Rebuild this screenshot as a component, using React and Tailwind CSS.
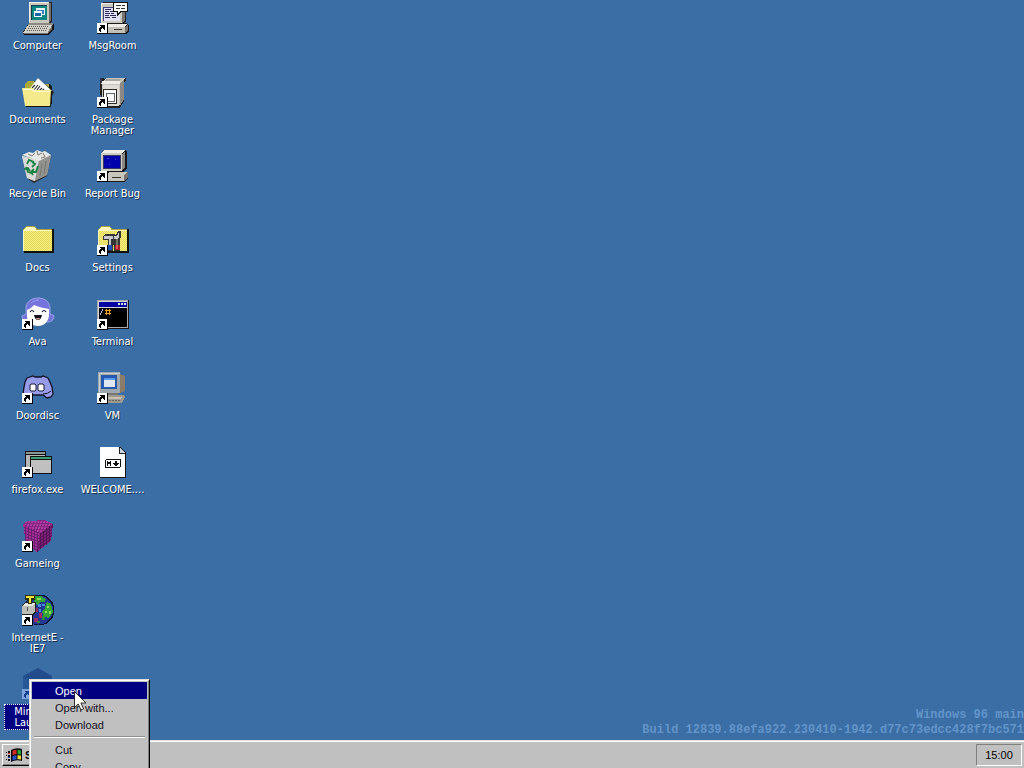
import React from "react";

function Shortcut() {
  return (
    <g>
      <rect x="0" y="21" width="11" height="11" fill="#000" />
      <rect x="0" y="21" width="10" height="10" fill="#fff" />
      <path d="M3 23h5v5H7v-1H6v-1H5v1H4v3H3v-1H2v-3h1v-1h1v-1H3z" fill="#000" />
    </g>
  );
}

function Icon({ children, shortcut, smooth, className = "" }) {
  return (
    <svg
      viewBox="0 0 32 32"
      className={`size-8 shrink-0 overflow-visible ${className}`}
      shapeRendering={smooth ? "auto" : "crispEdges"}
      aria-hidden="true"
    >
      {children}
      {shortcut && <Shortcut />}
    </svg>
  );
}

function ComputerIcon() {
  return (
    <Icon>
      <path d="M8 0h21l1 1v18l-3 3H7z" fill="#222" />
      <path d="M26 1h3v17l-3 3z" fill="#706c68" />
      <path d="M7 0h20v21H7z" fill="#c9c6bf" />
      <path d="M7 0h20v1H8v19H7z" fill="#f2f0ea" />
      <path d="M9 3h16v15H9z" fill="#123c42" />
      <path d="M10 4h15v14H10z" fill="#0b8580" />
      <path d="M14 6h9v7h-9z" fill="#e9f3ff" />
      <path d="M15 8h7v4h-7z" fill="#3b7fc0" />
      <path d="M12 9h8v6h-8z" fill="#f4fbff" />
      <path d="M13 11h6v3h-6z" fill="#1868a8" />
      <path d="M7 21h21l4 1v5l-5 6H2l-1-3z" fill="#111" />
      <path d="M7 21h24v2H6z" fill="#8b8984" />
      <path d="M6 23h24l-4 8H1z" fill="#d3d0c8" />
      <path d="M30 23v4l-4 5v-2z" fill="#74726e" />
      <path d="M7 24.5h19M5.500 26.500h20M4.500 28.500h19" stroke="#55534f" strokeDasharray="1 1" />
      <path d="M2 31h24v1H2z" fill="#77746f" />
    </Icon>
  );
}

function MsgRoomIcon() {
  return (
    <Icon shortcut>
      <path d="M6 0h21l2 2v17l-3 3H5z" fill="#292826" />
      <path d="M25 3h3v15l-3 3z" fill="#77746f" />
      <path d="M4 1h21v20H4z" fill="#cbc8c0" />
      <path d="M4 1h21v1H5v18H4z" fill="#efede7" />
      <path d="M6 5h17v14H6z" fill="#444078" />
      <path d="M7 6h16v13H7z" fill="#e3e1f6" />
      <path d="M8 7.500h6M8 9.500h4m1 0h5M8 11.500h5m1 0h3M8 13.500h4m1 0h6M8 15.500h5m2 0h4" stroke="#2c285f" />
      <path d="M7 21h23l2 3v5l-3 3H7z" fill="#1c1b1a" />
      <path d="M8 22h22l-2 3H8z" fill="#eeece6" />
      <path d="M8 25h20v6H8z" fill="#c3c0b8" />
      <path d="M28 25l3-2v5l-3 3z" fill="#77746f" />
      <path d="M17 27.500h8" stroke="#383632" />
      <path d="M16 0h15v10h-7l-4 4v-4h-4z" fill="#111" />
      <path d="M17 1h13v8h-7l-2 3V9h-4z" fill="#fff" />
      <path d="M19 3.500h5m1 0h3M19 6.500h4m1 0h4" stroke="#333" />
    </Icon>
  );
}

function DocumentsIcon() {
  return (
    <Icon smooth>
      <path d="M4 8l3-3h6l3 3h12l2 3v17H4z" fill="#15150c" />
      <path d="M3 8l3-3h6l3 3h12v20H3z" fill="#aaa936" />
      <path d="M7 16L16 2l16 14-4 8z" fill="#222" />
      <path d="M6 15L16 2l14 13-4 8z" fill="#fff" />
      <path d="M10 12l3-3m-1 5l4-5m-1 5l3-4m-1 5l3-3m-1 4l3-3m0 4l2-2" stroke="#333" strokeWidth="1.2" />
      <path d="M1 13h10l2 2h17l-1 16H4z" fill="#171710" />
      <path d="M0 12h11l2 2h16l-1 16H3z" fill="#f4e98b" />
      <path d="M1 13h10l2 2h15v1H12l-2-2H1z" fill="#fffbd0" />
    </Icon>
  );
}

function PackageIcon() {
  return (
    <Icon shortcut>
      <path d="M3 5l2-3 3 1 5-1h16v2l-2 3v18l-4 7H4z" fill="#22211f" />
      <path d="M5 6l5-4h18l-5 5v22H5z" fill="#c8c5bf" />
      <path d="M23 8l4-5v20l-4 7z" fill="#8c8984" />
      <path d="M4 5h19v3H4z" fill="#efede8" />
      <path d="M6 9h16v21H6z" fill="#dedbd5" />
      <path d="M10 3h15l-3 2H7z" fill="#aaa7a1" />
      <path d="M3 2h2v5H3z" fill="#35354b" />
      <path d="M6 13h14v15H6z" fill="#2d2926" />
      <path d="M7 14h12v13H7z" fill="#fff" />
      <path d="M9 17h9v9H9z" fill="#666" />
      <path d="M10 18h7v7h-7z" fill="#fff" />
    </Icon>
  );
}

function RecycleIcon() {
  return (
    <Icon smooth>
      <path d="M2 7l27-2-4 21-13 7-6-4z" fill="#262727" />
      <path d="M0 6l17 4 12-5-4 20-13 6-7-3z" fill="#b9bab7" />
      <path d="M0 6l17 4-4 21-8-3z" fill="#d9dad7" />
      <path d="M17 10l12-5-4 20-12 6z" fill="#92938f" />
      <path d="M0 5l7-3 4 1 4-3 5 2 3-1 6 4-12 6z" fill="#e7e8e5" />
      <path d="M6 4l4 2 3-3m2-2l1 4 4-2m1 0l2 4-4 1" fill="none" stroke="#777975" />
      <path d="M5 14l2-4 5 2m-2 5l3-3-3-2M4 17l2 5 3 1M2 19l4-1 2 3m8-5l-2 6h-4m2-3l-3 3 2 3" fill="none" stroke="#168241" strokeWidth="1.800" />
      <path d="M20 13l-2 13m6-15l-2 13" stroke="#777975" strokeWidth="1" />
    </Icon>
  );
}

function ReportIcon() {
  return (
    <Icon shortcut>
      <path d="M7 0h22l1 2v16l-3 4H5z" fill="#181717" />
      <path d="M25 4l3-3v16l-3 4z" fill="#8a8781" />
      <path d="M4 3l3-3h21l-3 3z" fill="#efede8" />
      <path d="M4 3h21v18H4z" fill="#cfccc5" />
      <path d="M6 5h18v14H6z" fill="#393959" />
      <path d="M7 6h16v12H7z" fill="#0001ad" />
      <path d="M10 8h2v1h-2zm8 1h1v1h-1zm-6 5h1v1h-1z" fill="#3150d0" />
      <path d="M9 22h22v6l-4 4H9z" fill="#1b1a19" />
      <path d="M9 24l4-2h17l-3 3v6H9z" fill="#c8c5bd" />
      <path d="M27 25l4-3v6l-4 3z" fill="#77746f" />
      <path d="M15 27.500h9" stroke="#302e2b" />
    </Icon>
  );
}

function FolderShape({ id }) {
  return (
    <g>
      <defs>
        <pattern id={id} width="2" height="2" patternUnits="userSpaceOnUse">
          <rect width="2" height="2" fill="#f6ec80" />
          <rect width="1" height="1" fill="#e3d858" />
          <rect x="1" y="1" width="1" height="1" fill="#e3d858" />
        </pattern>
      </defs>
      <path d="M1 6l3-4h8l3 3h16l1 1v23H2z" fill="#11110b" />
      <path d="M1 5l3-3h8l3 3h15v22H1z" fill="#a8a344" />
      <path d="M3 4l1-1h8l2 2v1H2z" fill="#fff8bb" />
      <rect x="1" y="7" width="29" height="20" fill={`url(#${id})`} />
      <path d="M1 6h29v1H2v20H1z" fill="#fff9bd" />
    </g>
  );
}

function DocsIcon() {
  return (
    <Icon>
      <FolderShape id="folder-docs" />
    </Icon>
  );
}

function SettingsIcon() {
  return (
    <Icon shortcut>
      <FolderShape id="folder-settings" />
      <path d="M6 12l3-2h8l2 1 2-4h3v7h-1v13h-6v-6h-1v6h-5V16H6z" fill="#343432" />
      <path d="M7 12h9v3H7zM12 14h2v8h-2zM17 12h3l2-4v6l-2 1h-3z" fill="#c9c9c9" />
      <path d="M19 15h2v6h-2z" fill="#77746c" />
      <path d="M11 21h4v5h-4z" fill="#1d51b8" />
      <path d="M18 21h5v5h-5z" fill="#9e1e28" />
      <path d="M19 21h2v4h-2z" fill="#e45357" />
    </Icon>
  );
}

function AvaIcon() {
  return (
    <Icon shortcut smooth>
      <path
        d="M4 9C5 3 10 0 16 0s11 3 12 9l0 7c2 1 4 1 4 2 0 3-2 6-6 6H6c-4 0-6-3-6-6 1-1 3-1 4-2z"
        fill="#7474dc"
        stroke="#b3baf5"
        strokeWidth=".7"
      />
      <path d="M5 12c3-1 5-3 7-5 4 2 10 3 15 4v7c-1 6-5 10-11 10S5 24 5 18z" fill="#fff" />
      <path d="M8 14q2-3 4 0m8 0q2-3 4 0" fill="none" stroke="#171735" strokeWidth="1.200" />
      <path d="M12 17h8q-1 5-4 5t-4-5z" fill="#101020" />
      <path d="M14 20h4l-1 1.500h-2z" fill="#d9a080" />
      <path d="M9 5q3-3 8-3" fill="none" stroke="#9b9bf5" />
    </Icon>
  );
}

function TerminalIcon() {
  return (
    <Icon shortcut>
      <path d="M0 2h32v29H0z" fill="#151515" />
      <path d="M0 2h31v28H0z" fill="#aaa" />
      <path d="M1 3h29v26H1z" fill="#d5d5d5" />
      <path d="M2 4h28v5H2z" fill="#0000a2" />
      <path d="M21 5h2v2h-2zm3 0h2v2h-2zm3 0h2v2h-2z" fill="#ddd" />
      <path d="M2 10h28v19H2z" fill="#000" />
      <path d="M6 11v2H5v2H4v2H3v-2h1v-2h1v-2z" fill="#bccaff" />
      <path d="M9 11h1v6H9zm3 0h1v6h-1zm-4 1h6v1H8zm0 3h6v1H8z" fill="#f2a127" />
    </Icon>
  );
}

function DoordiscIcon() {
  return (
    <Icon shortcut smooth>
      <path
        d="M5 6l6-2 2 1h6l2-1 5 2 2 4 2 5 1 7-2 3-4 1-4-3H10l-4 3-5-4 1-7 1-5z"
        fill="#979be8"
        stroke="#111027"
        strokeWidth="1.300"
      />
      <path d="M21 22q5 0 8-3" fill="none" stroke="#111027" />
      <path d="M9 12h4l1 1v5l-1 1H9l-1-1v-5zm8 0h4l1 1v5l-1 1h-4l-1-1v-5z" fill="#fff" stroke="#171739" />
    </Icon>
  );
}

function VmIcon() {
  return (
    <Icon shortcut>
      <path d="M23 2l5 2v15l-5 2z" fill="#8b7b6a" />
      <path d="M1 0h22v21H1z" fill="#9fa7ae" />
      <path d="M2 1h21v1H3v18H2z" fill="#cbd1d5" />
      <path d="M4 3h16v14H4z" fill="#2f5999" />
      <path d="M5 4h14v12H5z" fill="#2458b4" />
      <path d="M7 6h11v9H7z" fill="#dfe6ed" />
      <path d="M7 6h11v2H7z" fill="#5a9be5" />
      <path d="M10 21h11v3H10z" fill="#7b7770" />
      <path d="M8 24l3-1h15l2 2-3 6H8z" fill="#9e998f" />
      <path d="M11 25h14l-1 2H11z" fill="#c7c0b4" />
      <path d="M12 28.500h11" stroke="#686660" strokeDasharray="2 1" />
    </Icon>
  );
}

function FirefoxIcon() {
  return (
    <Icon shortcut>
      <path d="M3 5h21v19H3z" fill="#111" />
      <path d="M4 6h19v17H4z" fill="#b7b7b7" />
      <path d="M4 6h19v2H4z" fill="#8b9592" />
      <path d="M4 8h19v1H4z" fill="#111" />
      <path d="M8 10h22v18H8z" fill="#111" />
      <path d="M9 11h20v16H9z" fill="#c0c0c0" />
      <path d="M9 11h20v2H9z" fill="#3e9c77" />
      <path d="M9 13h20v1H9z" fill="#111" />
    </Icon>
  );
}

function MarkdownIcon() {
  return (
    <Icon>
      <path d="M3 1h20l6 6v25H3z" fill="#141414" />
      <path d="M3 1h19v6h6v24H3z" fill="#fff" />
      <path d="M22 1l6 6h-6z" fill="#c7d4df" />
      <path d="M22 1v6h6" fill="none" stroke="#222" />
      <rect x="8.500" y="13.500" width="15" height="8" rx="1.500" fill="#fff" stroke="#111" />
      <path d="M10 20v-5h1l1 2 1-2h1v5h-1v-3l-1 2-1-2v3zM18 15h2v2h2v1h-1v1h-1v1h-2v-1h-1v-1h-1v-1h2z" fill="#111" />
    </Icon>
  );
}

function CubeIcon() {
  return (
    <Icon shortcut>
      <defs>
        <pattern id="cube-cells" width="3" height="3" patternUnits="userSpaceOnUse" patternTransform="skewY(20)">
          <rect width="3" height="3" fill="#a3309b" />
          <path d="M0 0h3v1H1v2H0z" fill="#6a1a68" />
        </pattern>
        <pattern id="cube-side" width="3" height="3" patternUnits="userSpaceOnUse" patternTransform="skewY(-35)">
          <rect width="3" height="3" fill="#84207e" />
          <path d="M0 0h3v1H1v2H0z" fill="#4d124e" />
        </pattern>
        <pattern id="cube-top" width="3" height="3" patternUnits="userSpaceOnUse" patternTransform="skewX(-20)">
          <rect width="3" height="3" fill="#b03ca8" />
          <path d="M0 0h3v1H1v2H0z" fill="#7f2379" />
        </pattern>
      </defs>
      <path d="M1 4l5-3 17-1 8 4-13 9z" fill="url(#cube-top)" />
      <path d="M1 4l17 9-3 19L4 24z" fill="url(#cube-cells)" />
      <path d="M18 13l13-9-2 17-14 11z" fill="url(#cube-side)" />
    </Icon>
  );
}

function InternetIcon() {
  return (
    <Icon shortcut>
      <circle cx="17" cy="16" r="15.500" fill="#101332" />
      <circle cx="16.500" cy="16" r="14.500" fill="#1f3a90" />
      <path d="M13 2h6l5 3-1 3h-5l-2 4-4-4zM25 8l4 2 2 8-4 6-5-1-2-5 3-4z" fill="#35a536" />
      <path d="M15 4h4v2h-4zm10 8h2v2h-2zm2 5h2v3h-2zm-4 0h2v2h-2z" fill="#8dde55" />
      <path d="M13 14h3v4h-3zm4 5h3v5h-3zm-5 5h4v4h-4z" fill="#a12b63" />
      <path d="M16 10h3v3h-3zm1 5h2v3h-2zm3-5h3v2h-3z" fill="#4c8bdd" />
      <path d="M20 22h3v4h-3zm-5 5h3v2h-3z" fill="#2e8a3c" />
      <path d="M0 12l3-4h11v10l-2 3H0z" fill="#24231f" />
      <path d="M0 12l3-3h10v8l-2 3H0z" fill="#bebeb9" />
      <path d="M3 9h10l-2 3H0z" fill="#e6e5df" />
      <path d="M6 13l-1 4" stroke="#555" />
      <path d="M3 1h10v5h-3v4H6V6H3z" fill="#302e08" />
      <path d="M4 2h8v2H9v5H7V4H4z" fill="#f1e43a" />
    </Icon>
  );
}

function LauncherIcon() {
  return (
    <Icon smooth>
      <path d="M1 8L16 0l14 8v16l-14 8L1 24z" fill="#234c8c" />
      <path d="M1 8l15 8v16L1 24z" fill="#285795" />
      <path d="M0 21h10v10H0z" fill="#7fa4dc" />
      <path d="M3 23h5v5H7v-1H6v-1H5v1H4v3H3v-1H2v-3h1v-1h1v-1H3z" fill="#123e8c" />
    </Icon>
  );
}

const desktopItems = [
  { name: "Computer", icon: ComputerIcon },
  { name: "Documents", icon: DocumentsIcon },
  { name: "Recycle Bin", icon: RecycleIcon },
  { name: "Docs", icon: DocsIcon },
  { name: "Ava", icon: AvaIcon },
  { name: "Doordisc", icon: DoordiscIcon },
  { name: "firefox.exe", icon: FirefoxIcon },
  { name: "Gameing", icon: CubeIcon },
  { name: "InternetE - IE7", icon: InternetIcon },
  { name: "Minecraft Launcher", icon: LauncherIcon, selected: true },
  { name: "MsgRoom", icon: MsgRoomIcon },
  { name: "Package Manager", icon: PackageIcon },
  { name: "Report Bug", icon: ReportIcon },
  { name: "Settings", icon: SettingsIcon },
  { name: "Terminal", icon: TerminalIcon },
  { name: "VM", icon: VmIcon },
  { name: "WELCOME....", icon: MarkdownIcon },
];

function DesktopItem({ name, icon: Glyph, selected }) {
  return (
    <button type="button" className="flex h-[74px] w-[75px] flex-col items-center gap-1 pt-0.5">
      <Glyph />
      <span
        className={`max-w-[70px] border border-dotted p-px text-center font-['DejaVu_Sans_Condensed','DejaVu_Sans',sans-serif] text-[11px] leading-[11px] text-white ${
          selected ? "w-[68px] border-white bg-[#000080]" : "border-transparent [text-shadow:1px_1px_0_#20304c]"
        }`}
      >
        {name}
      </span>
    </button>
  );
}

function MenuItem({ children, active }) {
  return (
    <button
      type="button"
      role="menuitem"
      className={`flex h-[17px] w-full items-center pt-0.5 pl-[23px] text-[11px] ${
        active ? "bg-[#000080] text-white" : "text-[#15101c]"
      }`}
    >
      {children}
    </button>
  );
}

function ContextMenu() {
  return (
    <div
      role="menu"
      className="absolute top-[679px] left-[29px] w-[121px] border border-t-[#dfdfdf] border-r-black border-b-black border-l-[#dfdfdf] bg-[#c0c0c0]"
    >
      <div className="border border-t-white border-r-[#808080] border-b-[#808080] border-l-white p-px">
        <MenuItem active>Open</MenuItem>
        <MenuItem>Open with...</MenuItem>
        <MenuItem>Download</MenuItem>
        <div role="separator" className="mx-0.5 my-[3px] h-0.5 border-t border-b border-t-[#909090] border-b-white" />
        <MenuItem>Cut</MenuItem>
        <MenuItem>Copy</MenuItem>
      </div>
    </div>
  );
}

function WindowsLogo() {
  return (
    <svg viewBox="0 0 18 16" className="h-4 w-[18px]" aria-hidden="true">
      <path d="M6 3q5-3 11-1v12q-6-2-11 1z" fill="#080808" />
      <path d="M7.500 4q2-1.200 4-1.200v4.400q-2 0-4 1z" fill="#d42a22" />
      <path d="M12.500 2.800q2 0 3.500.6v4.200q-1.600-.5-3.500-.4z" fill="#27a53a" />
      <path d="M7.500 9.300q2-1 4-1.100v4.200q-2 .1-4 1z" fill="#2350c8" />
      <path d="M12.500 8.200q2-.1 3.500.4v4q-1.500-.4-3.500-.3z" fill="#efd735" />
      <path d="M3 4h2v2H3zm-2 1h1v1H1zm2 3h2v2H3zM1 8h1v1H1zm2 4h2v2H3zm-2 0h1v1H1z" fill="#111" />
      <path d="M3 6h2v1H3z" fill="#d42a22" />
      <path d="M3 10h2v1H3z" fill="#2350c8" />
    </svg>
  );
}

function Taskbar() {
  return (
    <footer className="flex h-7 shrink-0 items-stretch justify-between border-t border-t-[#dfdfdf] bg-[#c0c0c0]">
      <div className="flex flex-1 items-stretch justify-between border-t border-white px-0.5 pt-0.5 pb-0.5">
        <button
          type="button"
          className="flex w-14 items-center gap-0.5 border border-t-white border-r-black border-b-black border-l-white pl-0.5 text-[11px] font-bold text-black shadow-[inset_-1px_-1px_0_#808080]"
        >
          <WindowsLogo />
          Start
        </button>
        <time className="flex w-[46px] items-center justify-center border border-t-[#808080] border-r-white border-b-white border-l-[#808080] text-[11px] text-black">
          15:00
        </time>
      </div>
    </footer>
  );
}

function Cursor() {
  return (
    <svg viewBox="0 0 13 20" className="pointer-events-none absolute top-[691px] left-[74px] h-5 w-[13px]" aria-hidden="true">
      <path d="M.5.5v16l3.700-3.500 2.800 6 2.600-1.200-2.700-5.800h5.100z" fill="#fff" stroke="#000" strokeWidth=".8" />
    </svg>
  );
}

export default function App() {
  return (
    <div className="relative flex h-screen flex-col overflow-hidden bg-[#3a6ea5] font-['Liberation_Sans',Arial,sans-serif] select-none">
      <main className="relative min-h-0 flex-1">
        <div className="grid w-max grid-flow-col grid-rows-10">
          {desktopItems.map((item) => (
            <DesktopItem key={item.name} {...item} />
          ))}
        </div>
        <div className="pointer-events-none absolute right-0 bottom-0.5 text-right font-['Liberation_Mono',monospace] text-[12px] leading-[15px] font-bold whitespace-nowrap text-[#6394c9]">
          <p>Windows 96 main</p>
          <p>Build 12839.88efa922.230410-1942.d77c73edcc428f7bc571</p>
        </div>
      </main>
      <Taskbar />
      <ContextMenu />
      <Cursor />
    </div>
  );
}
